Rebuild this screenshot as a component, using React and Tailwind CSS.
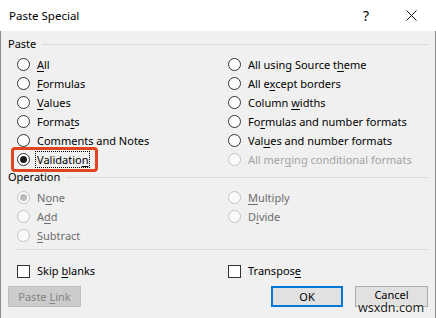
import React from 'react'

// Underline the accelerator letter at index i (Windows dialog mnemonic).
const acc = (text, i) =>
  i == null ? text : (
    <>
      {text.slice(0, i)}
      <u className="underline-offset-[2px]">{text[i]}</u>
      {text.slice(i + 1)}
    </>
  )

function Radio({ checked, disabled }) {
  return (
    <span className={`w-[13px] h-[13px] rounded-full border flex items-center justify-center shrink-0 ${disabled ? 'border-[#c2c2c2] bg-[#fafafa]' : 'border-[#333333] bg-white'}`}>
      {checked && <span className={`w-[7px] h-[7px] rounded-full ${disabled ? 'bg-[#bcbcbc]' : 'bg-[#1b1b1b]'}`} />}
    </span>
  )
}

function Option({ label, u, checked, disabled, dim, focus }) {
  const color = dim ? 'text-[#a3a3a3]' : disabled ? 'text-[#6d6d6d]' : 'text-black'
  return (
    <div className="h-[19px] flex items-center gap-[7px]">
      <Radio checked={checked} disabled={disabled || dim} />
      <span className={`${color} leading-[15px] ${focus ? 'outline outline-1 outline-dotted outline-black outline-offset-0 px-[1px] -ml-[1px]' : ''}`}>
        {acc(label, u)}
      </span>
    </div>
  )
}

function Check({ label, u }) {
  return (
    <div className="h-[19px] flex items-center gap-[7px]">
      <span className="w-[13px] h-[13px] border border-[#333333] bg-white shrink-0" />
      <span>{acc(label, u)}</span>
    </div>
  )
}

function Group({ title }) {
  return (
    <div className="flex items-center gap-[6px] h-[16px]">
      <span>{title}</span>
      <div className="h-px flex-1 bg-[#d8d8d8]" />
    </div>
  )
}

export default function App() {
  return (
    <div className="w-[436px] h-[318px] flex flex-col font-['Noto_Sans',sans-serif] text-[11px] text-black overflow-hidden bg-[#f0f0f0]">
      <div className="h-[31px] bg-white flex items-center pl-[9px] pr-[14px] shrink-0 text-[11.5px]">
        <span className="flex-1">Paste Special</span>
        <span className="text-[14px] mr-[37px]">?</span>
        <svg width="11" height="11" viewBox="0 0 11 11" className="mr-[5px]">
          <path d="M0.5 0.5 L10.5 10.5 M10.5 0.5 L0.5 10.5" stroke="#111" strokeWidth="1" />
        </svg>
      </div>

      <div className="flex-1 border-x border-[#8c8c8c] px-[7px] pt-[5px] relative">
        <Group title="Paste" />
        <div className="grid grid-cols-[211px_1fr] ml-[9px] mt-[3px]">
          <div className="flex flex-col">
            <Option label="All" u={0} />
            <Option label="Formulas" u={0} />
            <Option label="Values" u={0} />
            <Option label="Formats" u={5} />
            <Option label="Comments and Notes" />
            <div className="relative">
              <Option label="Validation" u={9} checked focus />
              <div className="absolute left-[-6px] top-[-3px] w-[87px] h-[25px] border-[3px] border-[#e0451f] rounded-[4px]" />
            </div>
          </div>
          <div className="flex flex-col">
            <Option label="All using Source theme" u={18} />
            <Option label="All except borders" u={5} />
            <Option label="Column widths" u={7} />
            <Option label="Formulas and number formats" u={2} />
            <Option label="Values and number formats" u={3} />
            <Option label="All merging conditional formats" u={7} dim />
          </div>
        </div>

        <div className="mt-[0px]">
          <Group title="Operation" />
        </div>
        <div className="grid grid-cols-[211px_1fr] ml-[9px] mt-[3px]">
          <div className="flex flex-col">
            <Option label="None" u={1} checked disabled />
            <Option label="Add" u={1} disabled />
            <Option label="Subtract" u={0} disabled />
          </div>
          <div className="flex flex-col">
            <Option label="Multiply" u={0} disabled />
            <Option label="Divide" u={1} disabled />
          </div>
        </div>

        <div className="h-px bg-[#d8d8d8] ml-[8px] mt-[4px]" />

        <div className="grid grid-cols-[211px_1fr] ml-[9px] mt-[12px]">
          <Check label="Skip blanks" u={5} />
          <Check label="Transpose" u={8} />
        </div>

        <div className="flex items-center mt-[5px]">
          <button className="w-[73px] h-[21px] border border-[#bfbfbf] bg-[#cccccc] text-[#838383] leading-none">
            {acc('Paste Link', 6)}
          </button>
          <div className="flex-1" />
          <button className="w-[72px] h-[21px] border-2 border-[#0078d7] bg-[#e1e1e1] leading-none">OK</button>
          <button className="w-[73px] h-[21px] ml-[12px] border border-[#adadad] bg-[#e1e1e1] leading-none pb-[5px]">Cancel</button>
        </div>

        <span className="absolute left-[357px] top-[271px] text-[12.5px] leading-none text-[#222] [text-shadow:0_0_2px_#fff,0_0_2px_#fff]">wsxdn.com</span>
      </div>
    </div>
  )
}
